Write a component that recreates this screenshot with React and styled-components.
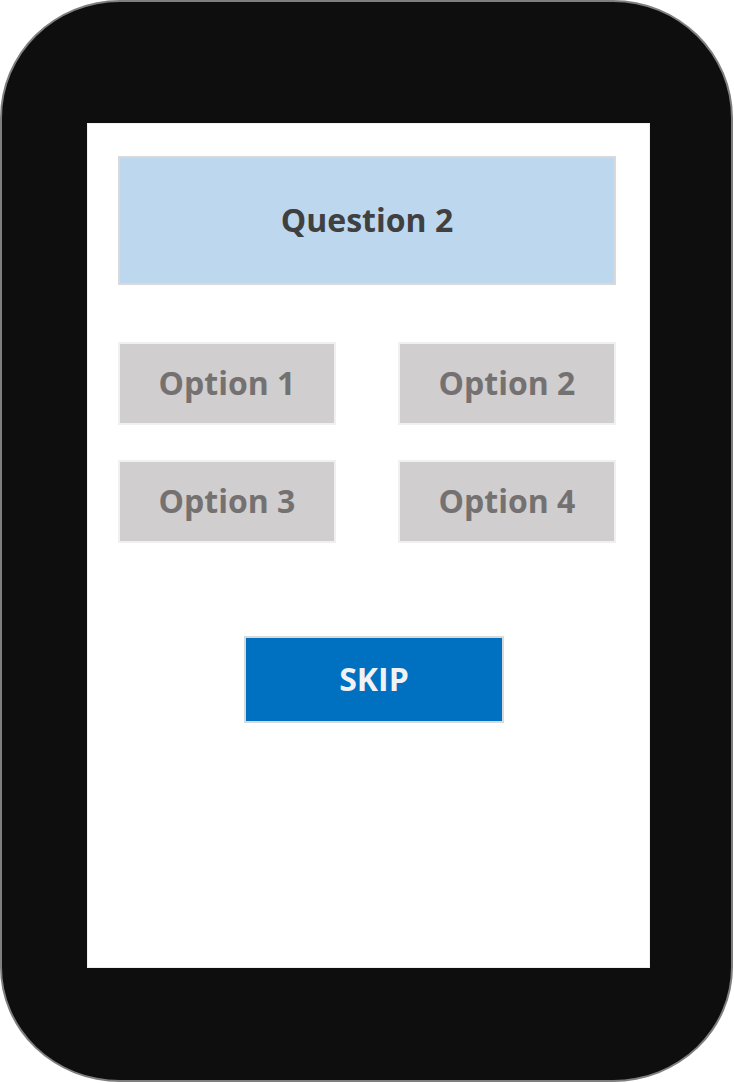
import React from 'react';
import styled, { createGlobalStyle } from 'styled-components';

const GlobalStyle = createGlobalStyle`
  html, body {
    margin: 0;
    padding: 0;
    background: #ffffff;
  }
  body {
    font-family: "Open Sans", "Noto Sans", "Liberation Sans", sans-serif;
  }
`;

export const PhoneFrame = styled.div`
  box-sizing: border-box;
  width: 733px;
  height: 1082px;
  background: #0e0e0e;
  border: 2px solid #7f7f7f;
  border-radius: 120px 120px 120px 120px / 118px 118px 115px 115px;
  padding: 121px 81px 112px 85px;
`;

export const Screen = styled.div`
  box-sizing: border-box;
  width: 563px;
  height: 845px;
  background: #ffffff;
  border: 1px solid #efefef;
  padding: 32px 33px 0 30px;
  display: flex;
  flex-direction: column;
`;

export const QuestionBox = styled.div`
  box-sizing: border-box;
  height: 129px;
  background: #bdd7ee;
  border: 2px solid #d9d9d9;
  display: flex;
  align-items: center;
  justify-content: center;
  font-size: 32px;
  font-weight: 700;
  color: #404040;
  padding-bottom: 2px;
`;

export const OptionGrid = styled.div`
  display: grid;
  grid-template-columns: 218px 218px;
  column-gap: 62px;
  row-gap: 35px;
  margin-top: 57px;
`;

export const OptionButton = styled.div`
  box-sizing: border-box;
  height: 83px;
  background: #d0cece;
  border: 2px solid #f0f0f0;
  display: flex;
  align-items: center;
  justify-content: center;
  font-size: 32px;
  font-weight: 700;
  color: #767171;
  padding-bottom: 2px;
`;

export const SkipButton = styled.div`
  box-sizing: border-box;
  width: 260px;
  height: 87px;
  margin-top: 93px;
  margin-left: 126px;
  background: #0070c0;
  border: 2px solid #d9d9d9;
  display: flex;
  align-items: center;
  justify-content: center;
  font-size: 32px;
  font-weight: 700;
  color: #f2f2f2;
  padding-bottom: 2px;
`;

const options = ['Option 1', 'Option 2', 'Option 3', 'Option 4'];

export default function App() {
  return (
    <>
      <GlobalStyle />
      <PhoneFrame>
        <Screen>
          <QuestionBox>Question 2</QuestionBox>
          <OptionGrid>
            {options.map((o) => (
              <OptionButton key={o}>{o}</OptionButton>
            ))}
          </OptionGrid>
          <SkipButton>SKIP</SkipButton>
        </Screen>
      </PhoneFrame>
    </>
  );
}
